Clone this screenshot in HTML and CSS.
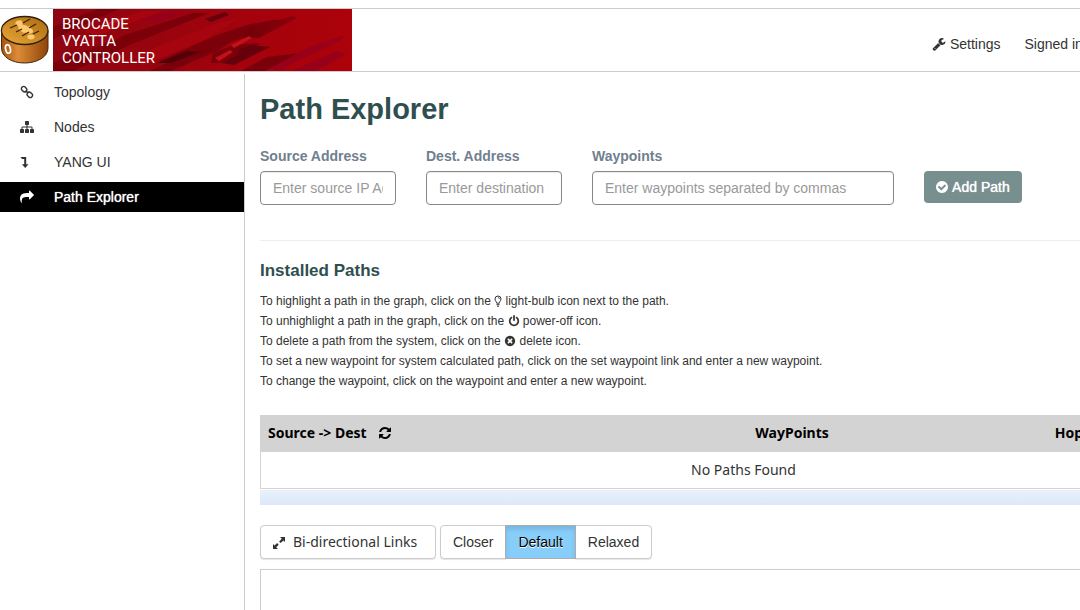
FILE: index.html
```html
<!DOCTYPE html>
<html lang="en">
  <head>
    <meta charset="UTF-8" />
    <meta name="viewport" content="width=device-width, initial-scale=1.0" />
    <title>Path Explorer</title>
    <link rel="stylesheet" href="styles.css">
  </head>
  <body>
    <!-- shared icon shapes -->
    <svg class="sprite" aria-hidden="true">
      <symbol id="wrench" viewBox="0 0 1792 1792"><path d="M448 1472q0-26-19-45t-45-19-45 19-19 45 19 45 45 19 45-19 19-45zm644-420l-682 682q-37 37-90 37-52 0-91-37l-106-108q-38-36-38-90 0-53 38-91l681-681q39 98 114.500 173.500t173.500 114.500zm634-435q0 39-23 106-47 134-164.500 217.500t-258.500 83.500q-185 0-316.500-131.500t-131.500-316.500 131.500-316.500 316.500-131.500q58 0 121.500 16.500t107.500 46.500q16 11 16 28t-16 28l-293 169v224l193 107q5-3 79-48.500t135.500-81 70.500-35.500q15 0 23.500 10t8.500 25z"/></symbol>
      <symbol id="link" viewBox="0 0 14 14"><g fill="none" stroke="currentColor" stroke-width="1.400"><rect x="1.300" y="2" width="5.600" height="4.400" rx="2" transform="rotate(45 4.100 4.200)"/><rect x="7" y="7.600" width="5.600" height="4.400" rx="2" transform="rotate(45 9.800 9.800)"/><path d="M4.800 6.500L8.500 7.300"/></g></symbol>
      <symbol id="sitemap" viewBox="0 0 1792 1792"><path d="M1792 1248v320q0 40-28 68t-68 28h-320q-40 0-68-28t-28-68v-320q0-40 28-68t68-28h96v-192h-512v192h96q40 0 68 28t28 68v320q0 40-28 68t-68 28h-320q-40 0-68-28t-28-68v-320q0-40 28-68t68-28h96v-192h-512v192h96q40 0 68 28t28 68v320q0 40-28 68t-68 28h-320q-40 0-68-28t-28-68v-320q0-40 28-68t68-28h96v-192q0-52 38-90t90-38h512v-192h-96q-40 0-68-28t-28-68v-320q0-40 28-68t68-28h320q40 0 68 28t28 68v320q0 40-28 68t-68 28h-96v192h512q52 0 90 38t38 90v192h96q40 0 68 28t28 68z"/></symbol>
      <symbol id="level-down" viewBox="0 0 14 14"><path d="M.5 2h5.700v7.200h2.300L5.200 13 1.900 9.200h2.300V4H2z"/></symbol>
      <symbol id="share" viewBox="0 0 1792 1792"><path d="M1792 640q0 26-19 45l-512 512q-19 19-45 19t-45-19-19-45v-256h-224q-98 0-175.500 6t-154 21.500-133 42.500-105.500 69.500-80 101-48.500 138.500-17.500 181q0 55 5 123 0 6 2.500 23.500t2.500 26.500q0 15-8.500 25t-23.500 10q-16 0-28-17-7-9-13-22t-13.500-30-10.500-24q-127-285-127-451 0-199 53-333 162-403 875-403h224v-256q0-26 19-45t45-19 45 19l512 512q19 19 19 45z"/></symbol>
      <symbol id="check-circle" viewBox="0 0 1792 1792"><path d="M1412 734q0-28-18-46l-91-90q-19-19-45-19t-45 19l-408 407-226-226q-19-19-45-19t-45 19l-91 90q-18 18-18 46 0 27 18 45l362 362q19 19 45 19 27 0 46-19l543-543q18-18 18-45zm252 162q0 209-103 385.500t-279.500 279.500-385.500 103-385.500-103-279.500-279.500-103-385.500 103-385.500 279.500-279.500 385.500-103 385.500 103 279.500 279.500 103 385.500z"/></symbol>
      <symbol id="times-circle" viewBox="0 0 1792 1792"><path d="M1277 1122q0-26-19-45l-181-181 181-181q19-19 19-45 0-27-19-46l-90-90q-19-19-46-19-26 0-45 19l-181 181-181-181q-19-19-45-19-27 0-46 19l-90 90q-19 19-19 46 0 26 19 45l181 181-181 181q-19 19-19 45 0 27 19 46l90 90q19 19 46 19 26 0 45-19l181-181 181 181q19 19 45 19 27 0 46-19l90-90q19-19 19-46zm387-226q0 209-103 385.500t-279.500 279.500-385.500 103-385.500-103-279.500-279.500-103-385.500 103-385.500 279.500-279.500 385.500-103 385.500 103 279.500 279.500 103 385.500z"/></symbol>
      <symbol id="power" viewBox="0 0 1792 1792"><path d="M1664 896q0 156-61 298t-164 245-245 164-298 61-298-61-245-164-164-245-61-298q0-182 80.500-343t226.500-270q43-32 95.500-25t83.500 50q32 42 24.500 94.500t-49.500 84.500q-98 74-151.500 181t-53.500 228q0 104 40.500 198.500t109.500 163.500 163.500 109.500 198.500 40.500 198.500-40.500 163.500-109.500 109.500-163.500 40.500-198.500q0-121-53.500-228t-151.500-181q-42-32-49.500-84.500t24.500-94.500q31-43 84-50t95 25q146 109 226.500 270t80.500 343zm-640-768v640q0 52-38 90t-90 38-90-38-38-90v-640q0-52 38-90t90-38 90 38 38 90z"/></symbol>
      <symbol id="bulb" viewBox="0 0 8 12"><g fill="none" stroke="currentColor"><path d="M2.700 8.200C2.700 6.600 1 6 1 4a3 3 0 0 1 6 0c0 2-1.700 2.600-1.700 4.200z"/><path d="M2.500 9.700h3M3 11.200h2M4.200 2.600c.8 0 1.200.5 1.300 1.200"/></g></symbol>
      <symbol id="refresh" viewBox="0 0 1792 1792"><path d="M1639 1056q0 5-1 7-64 268-268 434.500t-478 166.500q-146 0-282.500-55t-243.500-157l-129 129q-19 19-45 19t-45-19-19-45v-448q0-26 19-45t45-19h448q26 0 45 19t19 45-19 45l-137 137q71 66 161 102t187 36q134 0 250-65t186-179q11-17 53-117 8-23 30-23h192q13 0 22.500 9.500t9.500 22.500zm25-800v448q0 26-19 45t-45 19h-448q-26 0-45-19t-19-45 19-45l138-138q-148-137-349-137-134 0-250 65t-186 179q-11 17-53 117-8 23-30 23h-199q-13 0-22.500-9.500t-9.500-22.500v-7q65-268 270-434.500t480-166.500q146 0 284 55.500t245 156.500l130-129q19-19 45-19t45 19 19 45z"/></symbol>
      <symbol id="expand" viewBox="0 0 12 12"><path d="M7 0h5v5l-1.600-1.600-2.700 2.700-1.600-1.600 2.700-2.700zM5 12H0V7l1.600 1.600 2.500-2.500 1.600 1.600-2.500 2.500z"/></symbol>
    </svg>

    <div class="page">
      <header class="header">
        <a class="brand" href="#">
          <svg class="logo" viewBox="0 0 53 62" aria-hidden="true">
            <defs>
              <linearGradient id="side" x1="0" x2="1" y1="0" y2="0">
                <stop offset="0" stop-color="#a8520c"/>
                <stop offset=".35" stop-color="#dc8c38"/>
                <stop offset="1" stop-color="#8e4408"/>
              </linearGradient>
              <linearGradient id="top" x1="0" x2="1" y1="1" y2="0">
                <stop offset="0" stop-color="#e8a838"/>
                <stop offset="1" stop-color="#ab6a10"/>
              </linearGradient>
            </defs>
            <path d="M1.500 22v17c0 9 10.500 15 23 15s23.500-6 23.500-15V22z" fill="url(#side)" stroke="#4a2a10" stroke-width="1"/>
            <ellipse cx="24.700" cy="21.500" rx="23.300" ry="14" fill="url(#top)" stroke="#33200c" stroke-width="1.300"/>
            <g fill="#fcc870">
              <ellipse cx="19" cy="14" rx="3.600" ry="2.600"/>
              <ellipse cx="24" cy="18.500" rx="3.600" ry="2.600"/>
              <ellipse cx="29" cy="22" rx="4" ry="2.600"/>
              <ellipse cx="31" cy="28" rx="3.600" ry="2.400"/>
              <path d="M17 13l4-2 3 8 6-2 2 4-8 3-5-3z"/>
            </g>
            <path d="M10 19l7-3M23 14l7-4M16 23l6-3M29 19l7-4M22 27l7-4M33 25l6-3" fill="none" stroke="#3c2408" stroke-width="1.300"/>
            <ellipse cx="8" cy="40" rx="2.400" ry="4.300" fill="none" stroke="#fff" stroke-width="1.700" transform="rotate(-12 8 40)"/>
          </svg>
          <span class="banner">
            <svg class="banner-art" viewBox="0 0 299 62" preserveAspectRatio="none" aria-hidden="true">
              <defs>
                <linearGradient id="red" x1="0" x2="1" y1="0" y2="0">
                  <stop offset="0" stop-color="#8e0512"/>
                  <stop offset=".35" stop-color="#98040e"/>
                  <stop offset=".75" stop-color="#a6020c"/>
                  <stop offset="1" stop-color="#ac020a"/>
                </linearGradient>
                <linearGradient id="dark" x1="0" x2="1" y1="0" y2="0">
                  <stop offset="0" stop-color="#480006"/>
                  <stop offset="1" stop-color="#8c000a"/>
                </linearGradient>
              </defs>
              <path fill="url(#red)" d="M0 0h299v62H0z"/>
              <path fill="#7c000a" d="M0 18L44 0h22L0 30zM0 54l70-26 22 1L20 62H0zM66 28L140 4h16L84 33zM96 62l64-28 26-6-22 14-46 20z"/>
              <path fill="#a6040e" d="M84 46l80-32 24-6-34 22-66 27zM30 22l60-20h20L44 27z"/>
              <path fill="#7a000a" d="M106 52l58-26 30-10 32-6-22 14-34 12-44 22zM160 44l20-8 28-2-38 20h-12zM188 62l26-14 34-4-36 18z"/>
              <path fill="url(#dark)" d="M104 54l30-12 14 1-30 11zM194 20l46-13 4 2-38 20h-16z"/>
              <path fill="#66000a" d="M152 10l20-7 4 3-18 7zM185 41l14-5 18 2-36 18-12-2 16-8z"/>
              <path fill="#98001a" d="M216 60l40-22 36-12-4 5-46 22-14 9zM238 62l46-20 9 3-30 17zM88 10l28-8 16 1-26 10z"/>
              <path fill="#c4101a" d="M178 36l18-9 3 2-18 10zM162 49l15-8 3 2-14 9zM48 16l22-8 3 1-22 9z"/>
            </svg>
            <span class="banner-text">BROCADE<br>VYATTA<br>CONTROLLER</span>
          </span>
        </a>
        <div class="user-nav">
          <a href="#"><svg class="icon"><use href="#wrench"/></svg> Settings</a>
          <span>Signed in</span>
        </div>
      </header>

      <div class="layout">
        <nav class="sidebar">
          <a href="#"><svg class="icon"><use href="#link"/></svg>Topology</a>
          <a href="#"><svg class="icon"><use href="#sitemap"/></svg>Nodes</a>
          <a href="#"><svg class="icon"><use href="#level-down"/></svg>YANG UI</a>
          <a class="active" href="#"><svg class="icon"><use href="#share"/></svg>Path Explorer</a>
        </nav>

        <main class="content">
          <h1>Path Explorer</h1>
          <form class="path-form">
            <div class="field">
              <label for="source">Source Address</label>
              <input type="text" id="source" placeholder="Enter source IP Address" />
            </div>
            <div class="field">
              <label for="dest">Dest. Address</label>
              <input type="text" id="dest" placeholder="Enter destination IP Address" />
            </div>
            <div class="field wide">
              <label for="waypoints">Waypoints</label>
              <input type="text" id="waypoints" placeholder="Enter waypoints separated by commas" />
            </div>
            <button type="button" class="add-btn"><svg class="icon"><use href="#check-circle"/></svg> Add Path</button>
          </form>

          <h2>Installed Paths</h2>
          <div class="help">
            <p>To highlight a path in the graph, click on the <svg class="icon bulb"><use href="#bulb"/></svg> light-bulb icon next to the path.</p>
            <p>To unhighlight a path in the graph, click on the <svg class="icon"><use href="#power"/></svg> power-off icon.</p>
            <p>To delete a path from the system, click on the <svg class="icon"><use href="#times-circle"/></svg> delete icon.</p>
            <p>To set a new waypoint for system calculated path, click on the set waypoint link and enter a new waypoint.</p>
            <p>To change the waypoint, click on the waypoint and enter a new waypoint.</p>
          </div>

          <table class="paths">
            <thead>
              <tr>
                <th class="col-path">Source -&gt; Dest <svg class="icon"><use href="#refresh"/></svg></th>
                <th class="col-way">WayPoints</th>
                <th>Hops</th>
              </tr>
            </thead>
            <tbody>
              <tr><td colspan="3">No Paths Found</td></tr>
            </tbody>
          </table>
          <div class="table-footer"></div>

          <div class="toolbar">
            <button type="button" class="btn links-btn"><svg class="icon"><use href="#expand"/></svg>Bi-directional Links</button>
            <div class="btn-group">
              <button type="button" class="btn">Closer</button>
              <button type="button" class="btn selected">Default</button>
              <button type="button" class="btn">Relaxed</button>
            </div>
          </div>
          <div class="graph"></div>
        </main>
      </div>
    </div>
  </body>
</html>
```
FILE: styles.css
```css
* {
  box-sizing: border-box;
}
body {
  font-family: "Liberation Sans", Arial, sans-serif;
  font-size: 14px;
  line-height: 20px;
  color: #333;
  background: #fff;
  margin: 0;
  overflow: hidden;
}
a {
  color: inherit;
  text-decoration: none;
}
.sprite {
  display: none;
}
.icon {
  width: 14px;
  height: 14px;
  fill: currentColor;
  vertical-align: -2px;
}
/* wider than the window, the right side is cut off */
.page {
  width: 115%;
  height: 100vh;
  padding-top: 8px;
  display: flex;
  flex-direction: column;
}
.header {
  display: flex;
  border-top: 1px solid #ccc;
  border-bottom: 1px solid #ccc;
}
.brand {
  display: flex;
  width: 352px;
  height: 62px;
}
.logo {
  width: 53px;
  height: 62px;
}
.banner {
  flex: 1;
  display: grid;
}
.banner-art,
.banner-text {
  grid-area: 1 / 1;
}
.banner-art {
  width: 100%;
  height: 62px;
}
.banner-text {
  z-index: 1;
  padding: 7px 9px;
  font-family: Roboto, sans-serif;
  font-size: 15px;
  line-height: 17px;
  color: #fff;
}
.user-nav {
  display: flex;
  gap: 24px;
  align-items: center;
  margin-left: 580px;
  padding-top: 8px;
  white-space: nowrap;
}
.layout {
  flex: 1;
  min-height: 0;
  display: flex;
}
.sidebar {
  width: 245px;
  margin-top: 2px;
  padding-top: 3px;
  border-right: 1px solid #ccc;
  display: flex;
  flex-direction: column;
  gap: 5px;
}
.sidebar a {
  display: flex;
  align-items: center;
  gap: 20px;
  height: 30px;
  padding-left: 20px;
}
.sidebar .active {
  background: #000;
  color: #fff;
  text-shadow: 0 0 1px #fff;
}
.content {
  flex: 1;
  padding: 20px 15px 0;
  display: flex;
  flex-direction: column;
}
h1,
h2 {
  margin: 0;
  color: #2f4f4f;
}
h1 {
  font-size: 29px;
  line-height: 34px;
}
h2 {
  font-size: 17px;
  line-height: 20px;
}
.path-form {
  display: flex;
  gap: 30px;
  margin: 20px 0;
  padding-bottom: 35px;
  border-bottom: 1px solid #eee;
}
.field {
  width: 136px;
}
.wide {
  width: 302px;
}
label {
  display: block;
  margin-bottom: 5px;
  font-weight: bold;
  color: #708090;
}
input {
  width: 100%;
  height: 34px;
  padding: 6px 12px;
  font: inherit;
  border: 1px solid #888;
  border-radius: 4px;
  box-shadow: inset 0 1px 1px rgba(0, 0, 0, 0.08);
}
input::placeholder {
  color: #999;
}
.add-btn {
  height: 32px;
  margin-top: 25px;
  padding: 0 12px 0 11px;
  font: inherit;
  color: #fff;
  text-shadow: 0 0 1px #fff;
  background: #778f8f;
  border: none;
  border-radius: 4px;
}
.help {
  margin: 10px 0 24px;
  font-size: 12px;
}
.help p {
  margin: 0;
}
.help .icon {
  width: 12px;
  height: 12px;
}
.help .bulb {
  width: 8px;
}
.paths {
  width: 100%;
  table-layout: fixed;
  border-collapse: collapse;
  border: 1px solid #d3d3d3;
  font-family: "Noto Sans", sans-serif;
}
.paths th {
  height: 36px;
  padding: 0 7px 1px;
  text-align: left;
  color: #000;
  background: #d3d3d3;
}
.paths td {
  height: 37px;
  padding: 0;
  text-align: center;
}
.paths .icon {
  margin-left: 8px;
}
.col-path {
  width: 50.5%;
}
.col-way {
  width: 31%;
}
.table-footer {
  height: 15px;
  margin-top: 1px;
  background: linear-gradient(#e8f1fb, #dce8fa);
}
.toolbar {
  display: flex;
  gap: 4px;
  margin: 20px 0 10px;
}
.btn {
  height: 34px;
  padding: 0 12px;
  font: inherit;
  color: #333;
  background: #fff;
  border: 1px solid #ccc;
  border-radius: 4px;
  box-shadow: 0 1px 1px rgba(0, 0, 0, 0.1);
}
.links-btn {
  min-width: 176px;
  font-family: "Noto Sans", sans-serif;
  text-align: left;
}
.links-btn .icon {
  width: 12px;
  height: 12px;
  margin-right: 8px;
}
.btn-group {
  display: flex;
}
.btn-group .btn + .btn {
  margin-left: -1px;
}
.btn-group .btn:first-child {
  border-radius: 4px 0 0 4px;
}
.btn-group .btn:last-child {
  border-radius: 0 4px 4px 0;
}
.btn-group .selected {
  z-index: 1;
  color: #000;
  text-shadow: 0 1px 0 #fff;
  background: #87cefa;
  border-color: #adadad;
  border-radius: 0;
  box-shadow: inset 0 3px 5px rgba(0, 0, 0, 0.13);
}
.graph {
  flex: 1;
  border: 1px solid #ccc;
  border-bottom: none;
}
```
